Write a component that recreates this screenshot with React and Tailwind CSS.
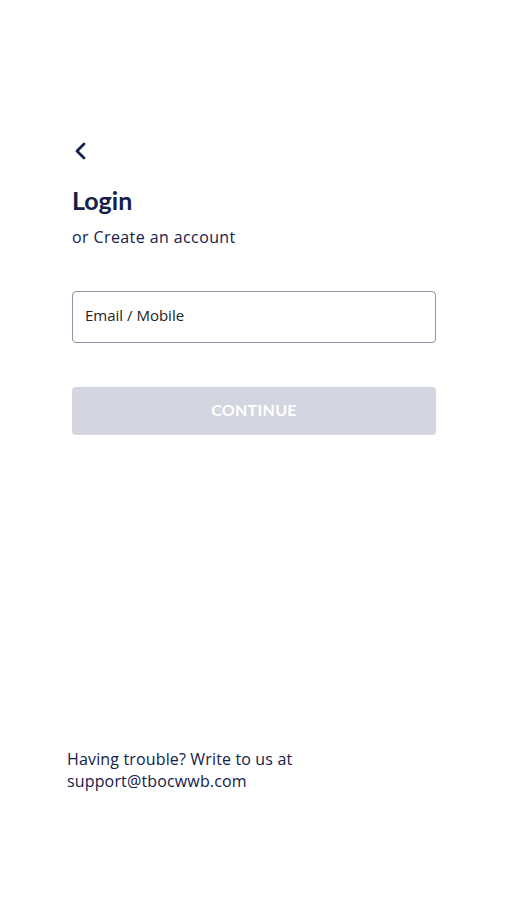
import React from "react";

export default function App() {
  return (
    <div className="w-[507px] h-[900px] bg-white flex flex-col" style={{ fontFamily: "Lato, 'Noto Sans', sans-serif" }}>
      <div className="pl-[72px] pr-[71px] pt-[139px] flex flex-col">
        <button className="w-6 h-6 ml-[1px] flex items-center justify-start text-[#14204a]">
          <svg width="16" height="24" viewBox="0 0 16 24" fill="none">
            <path d="M11 5 L4 12 L11 19" stroke="#14204a" strokeWidth="2.8" strokeLinecap="round" strokeLinejoin="round" />
          </svg>
        </button>
        <h1 className="mt-[22px] text-[25px] leading-[30px] font-bold text-[#14204a]">Login</h1>
        <p className="mt-[11px] text-[16px] leading-[22px] text-[#14204a] tracking-[0.4px]" style={{ fontFamily: "'Open Sans', sans-serif" }}>or Create an account</p>
        <div className="mt-[43px] h-[52px] border border-[#8f93a3] rounded-[4px] flex items-center px-[12px] pb-[3px]">
          <span className="text-[15px] text-[#222]" style={{ fontFamily: "'Open Sans', sans-serif" }}>Email / Mobile</span>
        </div>
        <div className="mt-[44px] h-[48px] rounded-[4px] bg-[#d3d6e0] flex items-center justify-center pb-[2px]">
          <span className="text-white font-bold text-[16px] tracking-[0.3px]">CONTINUE</span>
        </div>
      </div>
      <div className="mt-auto mb-[108px] pl-[67px] text-[16px] leading-[22px] text-[#14204a] tracking-[0.15px]" style={{ fontFamily: "'Open Sans', sans-serif" }}>
        <p>Having trouble? Write to us at</p>
        <p>support@tbocwwb.com</p>
      </div>
    </div>
  );
}
